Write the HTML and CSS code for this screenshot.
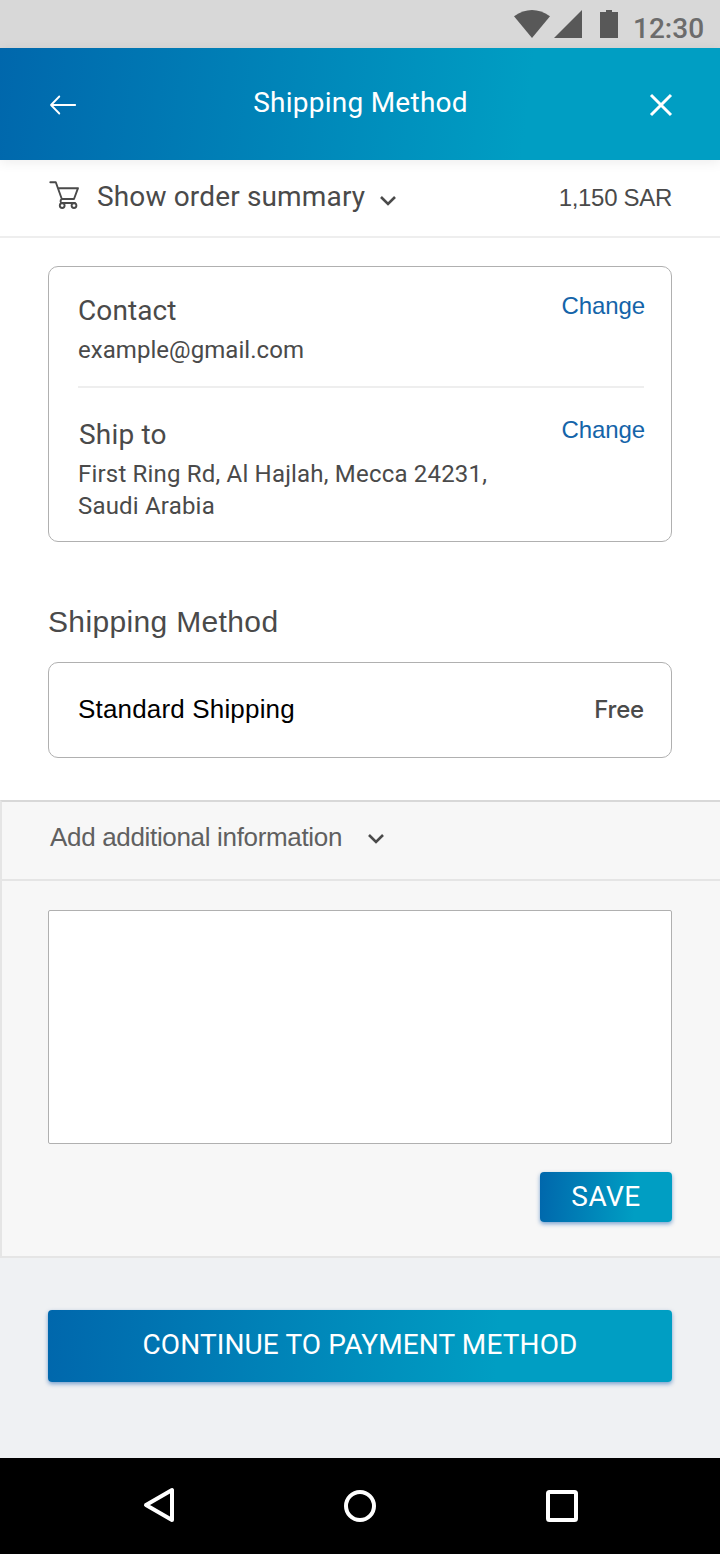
FILE: index.html
```html
<!DOCTYPE html>
<html lang="en">
<head>
<meta charset="utf-8">
<title>Shipping Method</title>
<link rel="stylesheet" href="styles.css">
</head>
<body>
<div class="status-bar">
  <svg class="status-icons" width="106" height="30" viewBox="0 0 106 30" fill="#585858">
    <path d="M0 6.200Q18-6.200 36 6.200L18 28Z"/>
    <path d="M40 28L68 0V28Z"/>
    <path d="M86 2H92V0H98V2H104V28H86Z"/>
  </svg>
  <span class="clock">12:30</span>
</div>
<header class="app-bar">
  <svg class="icon-back" width="28" height="20" viewBox="0 0 28 20" fill="none" stroke="#fff" stroke-width="1.800" stroke-linecap="round" stroke-linejoin="round"><path d="M10.300 1.500L2 10L10.300 18.500M2 10H26.200"/></svg>
  <h1 class="app-title">Shipping Method</h1>
  <svg class="icon-close" width="24" height="24" viewBox="0 0 24 24" fill="none" stroke="#fff" stroke-width="3"><path d="M2 2L22 22M22 2L2 22"/></svg>
</header>
<section class="summary">
  <svg class="icon-cart" width="32" height="30" viewBox="0 0 32 30" fill="none" stroke="#4a4a4a" stroke-width="1.900" stroke-linecap="round" stroke-linejoin="round">
    <path d="M2.300 1.300H7.800L13.800 18H26L30 7.200H10M13.800 18C11.800 19.500 12.300 22 14.500 22H27"/>
    <circle cx="14.200" cy="24.600" r="2.400" fill="#fff"/><circle cx="26" cy="24.600" r="2.400" fill="#fff"/>
  </svg>
  <span class="summary-label">Show order summary</span>
  <svg class="chevron" width="18" height="12" viewBox="0 0 18 12" fill="none" stroke="#4a4a4a" stroke-width="2.600"><path d="M2 2L9 9L16 2"/></svg>
  <span class="price">1,150 SAR</span>
</section>
<main class="content">
  <div class="card details">
    <div class="detail">
      <div class="detail-text">
        <h2 class="detail-title">Contact</h2>
        <p class="detail-value">example@gmail.com</p>
      </div>
      <a class="change">Change</a>
    </div>
    <div class="detail">
      <div class="detail-text">
        <h2 class="detail-title ship-title">Ship to</h2>
        <p class="detail-value address">First Ring Rd, Al Hajlah, Mecca 24231,<br>Saudi Arabia</p>
      </div>
      <a class="change">Change</a>
    </div>
  </div>
  <h2 class="section-title">Shipping Method</h2>
  <div class="card method">
    <span class="method-name">Standard Shipping</span>
    <span class="method-price">Free</span>
  </div>
</main>
<section class="extra">
  <div class="extra-head">
    <span class="extra-label">Add additional information</span>
    <svg class="extra-chevron" width="18" height="12" viewBox="0 0 18 12" fill="none" stroke="#4a4a4a" stroke-width="2.600"><path d="M2 2L9 9L16 2"/></svg>
  </div>
  <div class="extra-body">
    <textarea class="note"></textarea>
    <button class="button save">SAVE</button>
  </div>
</section>
<footer class="actions">
  <button class="button continue">CONTINUE TO PAYMENT METHOD</button>
</footer>
<nav class="nav-bar">
  <svg class="nav-back" width="32" height="36" viewBox="0 0 32 36" fill="none" stroke="#fff" stroke-width="4" stroke-linejoin="round"><path d="M29 3V33L3 18Z"/></svg>
  <svg class="nav-home" width="32" height="32" viewBox="0 0 32 32" fill="none" stroke="#fff" stroke-width="4"><circle cx="16" cy="16" r="14"/></svg>
  <svg class="nav-recent" width="32" height="32" viewBox="0 0 32 32" fill="none" stroke="#fff" stroke-width="4"><rect x="2" y="2" width="28" height="28" rx="1.500"/></svg>
</nav>
</body>
</html>
```
FILE: styles.css
```css
* { box-sizing: border-box; }
body {
  margin: 0;
  width: 720px;
  height: 1554px;
  display: flex;
  flex-direction: column;
  background: #fff;
  color: #4a4a4a;
  font-family: Roboto, sans-serif;
}
h1, h2, p { margin: 0; font-weight: 400; }
svg { display: block; flex: none; }

.status-bar {
  height: 48px;
  padding: 10px 16px 0 0;
  display: flex;
  justify-content: flex-end;
  background: #d8d8d8;
}
.status-icons { margin-right: 13px; }
.clock {
  width: 71px;
  padding-top: 1px;
  font-size: 28px;
  line-height: 36px;
  font-weight: 500;
  color: #6c6c6c;
  white-space: nowrap;
}

.app-bar {
  height: 112px;
  padding: 0 47px 0 49px;
  display: grid;
  grid-template-columns: 28px 1fr 24px;
  align-items: center;
  background: linear-gradient(97deg, #0067ac 0%, #009ec3 73%);
  color: #fff;
  box-shadow: 0 2px 12px rgba(0, 0, 0, 0.08);
}
.icon-back, .icon-close { margin-top: 2px; }
.app-title {
  padding: 0 5px 2px 0;
  text-align: center;
  font-size: 28px;
  line-height: 32px;
  letter-spacing: 0.25px;
}

.summary {
  height: 78px;
  padding: 0 48px 2px 48px;
  display: flex;
  align-items: center;
  border-bottom: 2px solid #eee;
}
.icon-cart { margin: -2px 17px 0 0; }
.summary-label {
  font-size: 28px;
  line-height: 36px;
  letter-spacing: 0.15px;
}
.chevron { margin: 7px 0 0 14px; }
.price {
  margin-left: auto;
  padding-top: 2px;
  font: 24px/32px "Liberation Sans", sans-serif;
  letter-spacing: -0.3px;
}

.content { height: 562px; padding: 28px 48px 0; }
.card { border: 1px solid #b0b0b0; border-radius: 10px; }
.details { height: 276px; padding: 0 26px 0 29px; }
.detail {
  display: flex;
  justify-content: space-between;
  height: 121px;
  padding-top: 23px;
  position: relative;
}
.detail + .detail { padding-top: 26px; }
.detail:first-child::after {
  content: "";
  position: absolute;
  left: 0;
  right: 1px;
  bottom: 0;
  border-bottom: 2px solid #eee;
}
.detail-title {
  padding-top: 3px;
  font-size: 28px;
  line-height: 36px;
  letter-spacing: 0.1px;
}
.ship-title { padding-left: 1px; letter-spacing: 0.2px; }
.detail-value {
  margin-top: 5px;
  font-size: 24px;
  line-height: 32px;
  letter-spacing: 0.05px;
}
.address { letter-spacing: 0.19px; }
.change {
  color: #1464a9;
  font: 24px/32px "Liberation Sans", sans-serif;
  letter-spacing: -0.1px;
}
.section-title {
  margin: 62px 0 22px;
  font: 30px/36px "Liberation Sans", sans-serif;
  letter-spacing: 0.35px;
}
.method {
  height: 96px;
  padding: 0 27px 2px 29px;
  display: flex;
  align-items: center;
  justify-content: space-between;
}
.method-name {
  color: #000;
  font: 26px/32px "Liberation Sans", sans-serif;
  letter-spacing: 0.17px;
}
.method-price {
  padding-top: 2px;
  font: 500 24px/32px Inter, sans-serif;
  letter-spacing: -0.2px;
}

.extra {
  height: 458px;
  background: #f7f7f7;
  border: 2px solid #e5e5e5;
  border-top-color: #d8d8d8;
  border-right: 0;
}
.extra-head {
  height: 79px;
  padding: 0 0 8px 48px;
  display: flex;
  align-items: center;
  border-bottom: 2px solid #e5e5e5;
}
.extra-label {
  color: #606060;
  font: 26px/32px "Liberation Sans", sans-serif;
  letter-spacing: -0.33px;
}
.extra-chevron { margin: 5px 0 0 25px; }
.extra-body {
  padding: 29px 48px 0 46px;
  display: flex;
  flex-direction: column;
  align-items: flex-end;
}
.note {
  width: 624px;
  height: 234px;
  background: #fff;
  border: 1px solid #b0b0b0;
  border-radius: 2px;
  resize: none;
}
.button {
  padding: 0;
  border: 0;
  border-radius: 4px;
  background: linear-gradient(94deg, #0067ac 0%, #009ec3 72%);
  box-shadow: 0 2px 4px rgba(0, 80, 170, 0.5);
  color: #fff;
  font: 28px/32px Roboto, sans-serif;
}
.save { width: 132px; height: 50px; margin-top: 28px; letter-spacing: 0.5px; }
.actions { height: 200px; padding: 52px 48px 0; background: #eff1f3; }
.continue { width: 624px; height: 72px; padding-bottom: 2px; letter-spacing: 0.12px; }

.nav-bar {
  height: 96px;
  padding: 0 142px 0 143px;
  display: flex;
  align-items: center;
  justify-content: space-between;
  background: #000;
}
.nav-back { margin-top: -2px; }
.nav-home { margin-right: 1px; }
```
